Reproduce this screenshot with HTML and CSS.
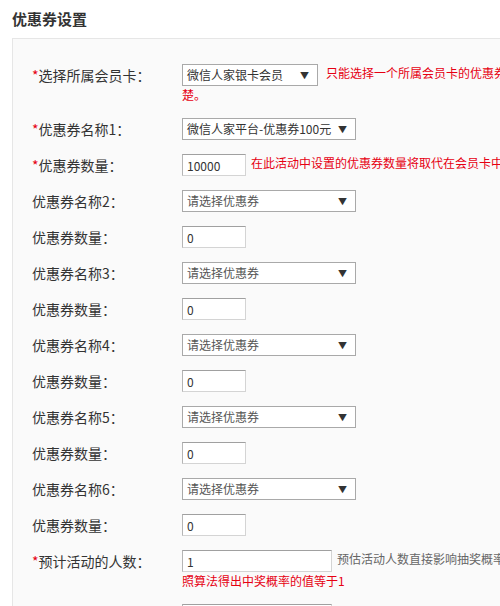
FILE: index.html
```html
<!DOCTYPE html>
<html lang="zh-CN">
<head>
<meta charset="utf-8">
<title>优惠券设置</title>
<link rel="stylesheet" href="styles.css">
</head>
<body>
<h2 class="title">优惠券设置</h2>
<div class="panel">
  <div class="row">
    <div class="label"><span class="req">*</span>选择所属会员卡：</div>
    <div class="field">
      <span class="select w136"><span class="select-text dark">微信人家银卡会员</span><span class="arrow">▼</span></span><span class="hint red">只能选择一个所属会员卡的优惠券，请根据实际情况选择，务必清楚。</span>
    </div>
  </div>
  <div class="row">
    <div class="label"><span class="req">*</span>优惠券名称1：</div>
    <div class="field">
      <span class="select w174"><span class="select-text dark">微信人家平台-优惠券100元</span><span class="arrow">▼</span></span>
    </div>
  </div>
  <div class="row">
    <div class="label"><span class="req">*</span>优惠券数量：</div>
    <div class="field">
      <input class="input w64" type="text" value="10000"><span class="hint red nowrap">在此活动中设置的优惠券数量将取代在会员卡中设置的数量</span>
    </div>
  </div>
  <div class="row">
    <div class="label">优惠券名称2：</div>
    <div class="field"><span class="select w174"><span class="select-text">请选择优惠券</span><span class="arrow">▼</span></span></div>
  </div>
  <div class="row">
    <div class="label">优惠券数量：</div>
    <div class="field"><input class="input w64" type="text" value="0"></div>
  </div>
  <div class="row">
    <div class="label">优惠券名称3：</div>
    <div class="field"><span class="select w174"><span class="select-text">请选择优惠券</span><span class="arrow">▼</span></span></div>
  </div>
  <div class="row">
    <div class="label">优惠券数量：</div>
    <div class="field"><input class="input w64" type="text" value="0"></div>
  </div>
  <div class="row">
    <div class="label">优惠券名称4：</div>
    <div class="field"><span class="select w174"><span class="select-text">请选择优惠券</span><span class="arrow">▼</span></span></div>
  </div>
  <div class="row">
    <div class="label">优惠券数量：</div>
    <div class="field"><input class="input w64" type="text" value="0"></div>
  </div>
  <div class="row">
    <div class="label">优惠券名称5：</div>
    <div class="field"><span class="select w174"><span class="select-text">请选择优惠券</span><span class="arrow">▼</span></span></div>
  </div>
  <div class="row">
    <div class="label">优惠券数量：</div>
    <div class="field"><input class="input w64" type="text" value="0"></div>
  </div>
  <div class="row">
    <div class="label">优惠券名称6：</div>
    <div class="field"><span class="select w174"><span class="select-text">请选择优惠券</span><span class="arrow">▼</span></span></div>
  </div>
  <div class="row">
    <div class="label">优惠券数量：</div>
    <div class="field"><input class="input w64" type="text" value="0"></div>
  </div>
  <div class="row">
    <div class="label"><span class="req">*</span>预计活动的人数：</div>
    <div class="field">
      <div class="line"><input class="input w150" type="text" value="1"><span class="hint gray nowrap">预估活动人数直接影响抽奖概率，中奖概率大于1时，按</span></div>
      <div class="line red">照算法得出中奖概率的值等于1</div>
    </div>
  </div>
  <div class="row">
    <div class="label"><span class="req">*</span>每人抽奖次数：</div>
    <div class="field"><input class="input w150" type="text" value="1"></div>
  </div>
</div>
</body>
</html>
```

FILE: styles.css
```css
html, body {
  overflow: hidden;
}
body {
  margin: 0;
  padding: 8px 12px 0 12px;
  background: #fff;
  font-family: "Noto Sans CJK SC", "Noto Sans", sans-serif;
  color: #333;
}
.title {
  margin: 0 0 8px 0;
  font-size: 15px;
  line-height: 22px;
  font-weight: bold;
  color: #333;
}
.panel {
  width: 720px;
  box-sizing: border-box;
  border: 1px solid #e6e6e6;
  background: #fafafa;
  padding: 25px 0 20px 19px;
}
.row {
  display: flex;
  align-items: flex-start;
  margin-bottom: 14px;
}
.label {
  width: 150px;
  flex-shrink: 0;
  font-size: 14px;
  line-height: 22px;
  color: #333;
  white-space: nowrap;
}
.req {
  color: #e60012;
}
.field {
  width: 498px;
  flex-shrink: 0;
  font-size: 12px;
  line-height: 18px;
}
.line {
  line-height: 18px;
}
.select {
  display: inline-flex;
  align-items: center;
  justify-content: space-between;
  box-sizing: border-box;
  height: 22px;
  border: 1px solid #a9a9a9;
  background: #fff;
  padding: 0 8px 0 4px;
  vertical-align: middle;
  font-size: 12px;
  color: #555;
  white-space: nowrap;
}
.select-text.dark {
  color: #333;
}
.arrow {
  font-size: 9px;
  color: #333;
  line-height: 1;
}
.w136 { width: 136px; }
.w174 { width: 174px; }
.w64 { width: 64px; }
.w150 { width: 150px; }
.input {
  box-sizing: border-box;
  height: 22px;
  margin: 0;
  padding: 0 4px;
  border: 1px solid #d4d4d4;
  border-top-color: #a0a0a0;
  border-left-color: #b5b5b5;
  background: #fff;
  font-family: "Noto Sans CJK SC", "Noto Sans", sans-serif;
  font-size: 12px;
  color: #333;
  vertical-align: middle;
  outline: none;
}
.hint {
  margin-left: 8px;
}
.input + .hint {
  margin-left: 5px;
}
.nowrap {
  white-space: nowrap;
}
.red {
  color: #e60012;
}
.gray {
  color: #666;
}
```
